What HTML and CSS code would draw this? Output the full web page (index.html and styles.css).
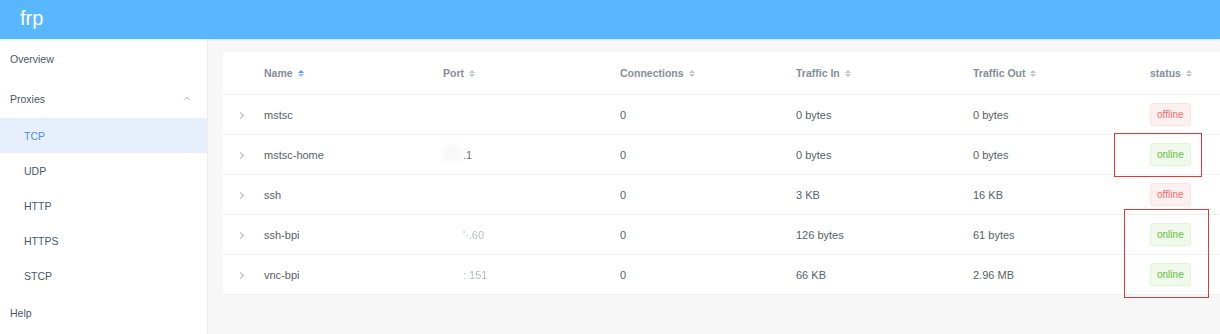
FILE: index.html
```html
<!DOCTYPE html>
<html lang="en">
<head>
    <meta charset="UTF-8">
    <title>frp</title>
    <link rel="stylesheet" href="styles.css">
</head>
<body>
    <header class="topbar">
        <span class="brand">frp</span>
    </header>

    <div class="layout">
        <aside class="sidebar">
            <div class="menu-item">Overview</div>
            <div class="menu-item submenu-title">
                Proxies
                <svg class="menu-arrow" width="8" height="5" viewBox="0 0 8 5"><path d="M1 4.2 L4 1.2 L7 4.2" fill="none" stroke="#b4b9c2" stroke-width="1"/></svg>
            </div>
            <div class="sub-item active">TCP</div>
            <div class="sub-item">UDP</div>
            <div class="sub-item">HTTP</div>
            <div class="sub-item">HTTPS</div>
            <div class="sub-item">STCP</div>
            <div class="menu-item">Help</div>
        </aside>

        <main class="content">
            <div class="card">
                <table class="proxy-table">
                    <colgroup>
                        <col class="c-expand">
                        <col class="c-name">
                        <col class="c-port">
                        <col class="c-conn">
                        <col class="c-in">
                        <col class="c-out">
                        <col class="c-status">
                    </colgroup>
                    <thead>
                        <tr>
                            <th></th>
                            <th>Name <span class="sort asc"><i class="up"></i><i class="down"></i></span></th>
                            <th>Port <span class="sort"><i class="up"></i><i class="down"></i></span></th>
                            <th>Connections <span class="sort"><i class="up"></i><i class="down"></i></span></th>
                            <th>Traffic In <span class="sort"><i class="up"></i><i class="down"></i></span></th>
                            <th>Traffic Out <span class="sort"><i class="up"></i><i class="down"></i></span></th>
                            <th>status <span class="sort"><i class="up"></i><i class="down"></i></span></th>
                        </tr>
                    </thead>
                    <tbody>
                        <tr>
                            <td class="expand"><span class="chev"></span></td>
                            <td>mstsc</td>
                            <td></td>
                            <td>0</td>
                            <td>0 bytes</td>
                            <td>0 bytes</td>
                            <td><span class="tag tag-off">offline</span></td>
                        </tr>
                        <tr>
                            <td class="expand"><span class="chev"></span></td>
                            <td>mstsc-home</td>
                            <td><span class="masked"><span class="smudge"></span>.1</span></td>
                            <td>0</td>
                            <td>0 bytes</td>
                            <td>0 bytes</td>
                            <td><span class="tag tag-on">online</span></td>
                        </tr>
                        <tr>
                            <td class="expand"><span class="chev"></span></td>
                            <td>ssh</td>
                            <td></td>
                            <td>0</td>
                            <td>3 KB</td>
                            <td>16 KB</td>
                            <td><span class="tag tag-off">offline</span></td>
                        </tr>
                        <tr>
                            <td class="expand"><span class="chev"></span></td>
                            <td>ssh-bpi</td>
                            <td><span class="masked faint">'·.60</span></td>
                            <td>0</td>
                            <td>126 bytes</td>
                            <td>61 bytes</td>
                            <td><span class="tag tag-on">online</span></td>
                        </tr>
                        <tr>
                            <td class="expand"><span class="chev"></span></td>
                            <td>vnc-bpi</td>
                            <td><span class="masked faint">: 151</span></td>
                            <td>0</td>
                            <td>66 KB</td>
                            <td>2.96 MB</td>
                            <td><span class="tag tag-on">online</span></td>
                        </tr>
                    </tbody>
                </table>

                <!-- annotation boxes drawn over the screenshot -->
                <div class="mark mark-one"></div>
                <div class="mark mark-two"></div>
            </div>
        </main>
    </div>
</body>
</html>
```

FILE: styles.css
```css
body {
    margin: 0;
    font-family: 'Liberation Sans', Arial, sans-serif;
    background: #f7f7f7;
    color: #5a5e66;
    height: 334px;
    overflow: hidden;
}

.topbar {
    height: 39px;
    background: #58b7ff;
    display: flex;
    align-items: center;
    padding-left: 20px;
    box-shadow: 0 1px 2px rgba(88, 183, 255, 0.25);
    position: relative;
    z-index: 1;
}

.brand {
    color: #fff;
    font-size: 20px;
    line-height: 1;
    margin-top: -3px;
}

.layout {
    display: flex;
    height: 295px;
}

/* sidebar menu */
.sidebar {
    width: 207px;
    background: #fff;
    border-right: 1px solid #ececec;
    font-size: 10.5px;
    color: #48576a;
}

.menu-item {
    height: 39px;
    display: flex;
    align-items: center;
    padding-left: 10px;
}

.menu-item:first-child {
    height: 40px;
}

.submenu-title {
    justify-content: space-between;
    padding-right: 16px;
}

.menu-arrow {
    display: block;
}

.sub-item {
    height: 35px;
    display: flex;
    align-items: center;
    padding-left: 24px;
}

.sub-item.active {
    background: #e6effb;
    color: #4a90e2;
}

/* main area */
.content {
    flex: 1;
    padding: 13px 0 0 15px;
}

.card {
    position: relative;
    background: #fff;
}

.proxy-table {
    width: 100%;
    border-collapse: collapse;
    table-layout: fixed;
    font-size: 11px;
}

.c-expand { width: 31px; }
.c-name { width: 179px; }
.c-port { width: 177px; }
.c-conn { width: 176px; }
.c-in { width: 177px; }
.c-out { width: 177px; }

.proxy-table th,
.proxy-table td {
    text-align: left;
    padding: 0 0 0 10px;
    border-bottom: 1px solid #eef0f3;
    white-space: nowrap;
}

.proxy-table th {
    height: 42px;
    font-weight: bold;
    font-size: 10.5px;
    color: #878d99;
}

.proxy-table td {
    height: 39px;
}

.proxy-table td.expand {
    padding-left: 15px;
}

.chev {
    display: inline-block;
    width: 4px;
    height: 4px;
    border-right: 1px solid #b0b4bb;
    border-top: 1px solid #b0b4bb;
    transform: rotate(45deg);
    margin-bottom: 1px;
}

/* sort carets */
.sort {
    display: inline-flex;
    flex-direction: column;
    vertical-align: middle;
    margin-left: 2px;
    margin-top: -2px;
    gap: 1px;
}

.sort i {
    width: 0;
    height: 0;
    border-left: 3px solid transparent;
    border-right: 3px solid transparent;
}

.sort .up {
    border-bottom: 3px solid #c0c4cc;
}

.sort .down {
    border-top: 3px solid #c0c4cc;
}

.sort.asc .up {
    border-bottom-color: #409eff;
}

.sort.asc .down {
    border-top-color: #8cc5ff;
}

/* redacted port values */
.masked {
    color: #6b6f76;
    padding-left: 20px;
    position: relative;
}

.smudge {
    position: absolute;
    left: 0;
    top: -4px;
    width: 18px;
    height: 16px;
    background: #f8f8f9;
    filter: blur(2px);
}

.masked.faint {
    color: #b9bcc2;
    filter: blur(0.6px);
}

/* status tags */
.tag {
    display: inline-block;
    height: 21px;
    line-height: 21px;
    padding: 0 6px;
    font-size: 10px;
    border-radius: 3px;
    vertical-align: middle;
}

.tag-off {
    background: #fef0f0;
    border: 1px solid #fde2e2;
    color: #f56c6c;
}

.tag-on {
    background: #f0f9eb;
    border: 1px solid #e1f3d8;
    color: #67c23a;
}

.mark {
    position: absolute;
    border: 1px solid #e0383e;
    pointer-events: none;
}

.mark-one {
    left: 891px;
    top: 81px;
    width: 86px;
    height: 42px;
}

.mark-two {
    left: 901px;
    top: 157px;
    width: 83px;
    height: 87px;
}
```
